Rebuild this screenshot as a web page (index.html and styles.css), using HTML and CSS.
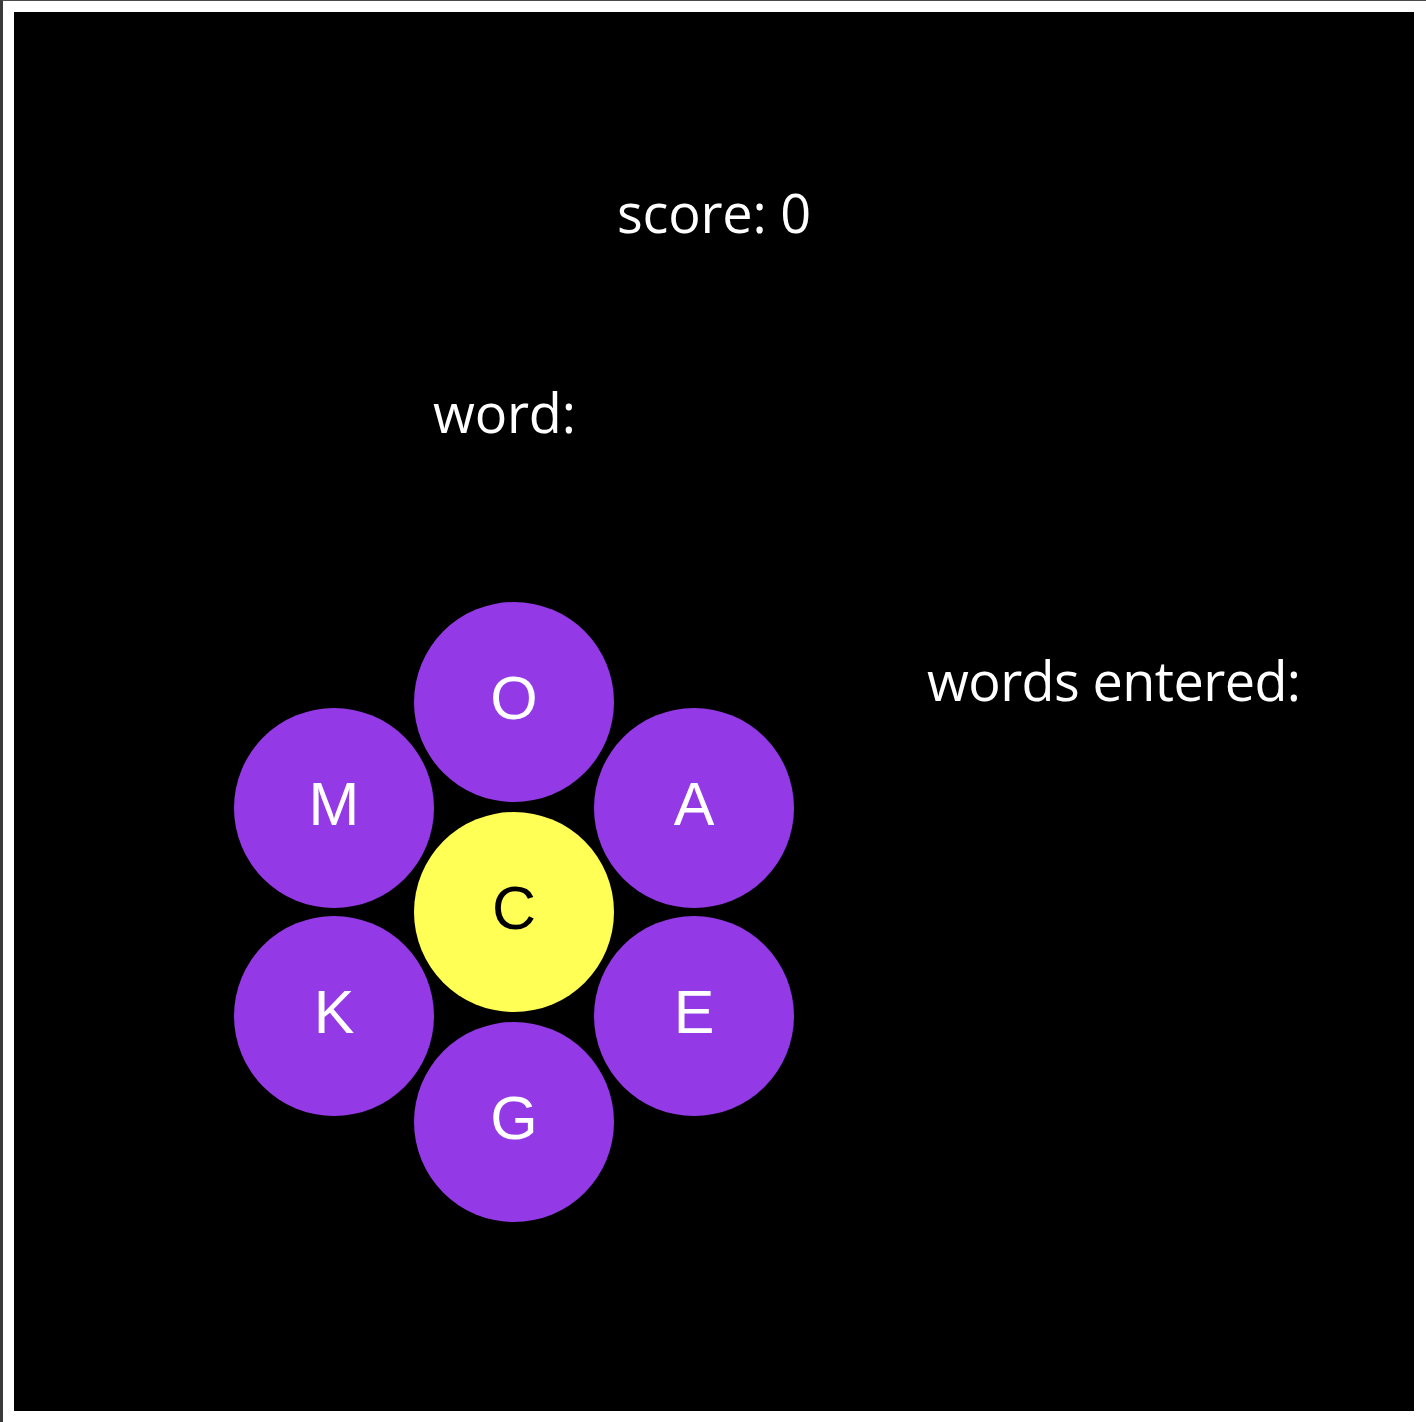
FILE: index.html
```html
<!DOCTYPE html>
<html lang="en">
<head>
<meta charset="utf-8">
<title>Spelling Bee</title>
<link rel="stylesheet" href="styles.css">
</head>
<body>
<div class="board">
  <div class="score">score: 0</div>
  <div class="main">
    <div class="play">
      <div class="word">word:</div>
      <div class="hive">
        <div class="col side">
          <div class="cell">M</div>
          <div class="cell">K</div>
        </div>
        <div class="col mid">
          <div class="cell">O</div>
          <div class="cell center">C</div>
          <div class="cell">G</div>
        </div>
        <div class="col side">
          <div class="cell">A</div>
          <div class="cell">E</div>
        </div>
      </div>
    </div>
    <div class="entered">
      <div class="entered-title">words entered:</div>
    </div>
  </div>
</div>
</body>
</html>
```

FILE: styles.css
```css
html, body {
  margin: 0;
  padding: 0;
  background: #ffffff;
}

body {
  border-left: 3px solid #3a3a3a;
  border-top: 1px solid #4a4a4a;
  min-height: 1422px;
  box-sizing: border-box;
}

.board {
  margin: 11px 0 0 11px;
  width: 1400px;
  height: 1399px;
  background: #000000;
  color: #ffffff;
  font-family: "Open Sans", "Lato", sans-serif;
  font-size: 54px;
  line-height: 60px;
  letter-spacing: -0.2px;
  padding-top: 170px;
  box-sizing: border-box;
}

.score {
  text-align: center;
}

.main {
  display: flex;
  margin-top: 140px;
}

.play {
  margin-left: 220px;
  width: 560px;
  display: flex;
  flex-direction: column;
}

.word {
  margin-left: 199px;
}

.hive {
  margin-top: 160px;
  display: flex;
  align-items: center;
}

.col {
  display: flex;
  flex-direction: column;
}

.side {
  gap: 8px;
}

.mid {
  gap: 10px;
  margin: 0 -20px;
}

.cell {
  width: 200px;
  height: 200px;
  border-radius: 50%;
  background: #9339e6;
  color: #ffffff;
  display: flex;
  align-items: center;
  justify-content: center;
  font-family: "Liberation Sans", Arial, sans-serif;
  font-size: 61px;
  line-height: 1;
  letter-spacing: 0;
  padding-bottom: 8px;
  box-sizing: border-box;
}

.cell.center {
  background: #ffff55;
  color: #000000;
}

.entered {
  margin-left: 133px;
  margin-top: 268px;
  letter-spacing: -0.6px;
}
```
